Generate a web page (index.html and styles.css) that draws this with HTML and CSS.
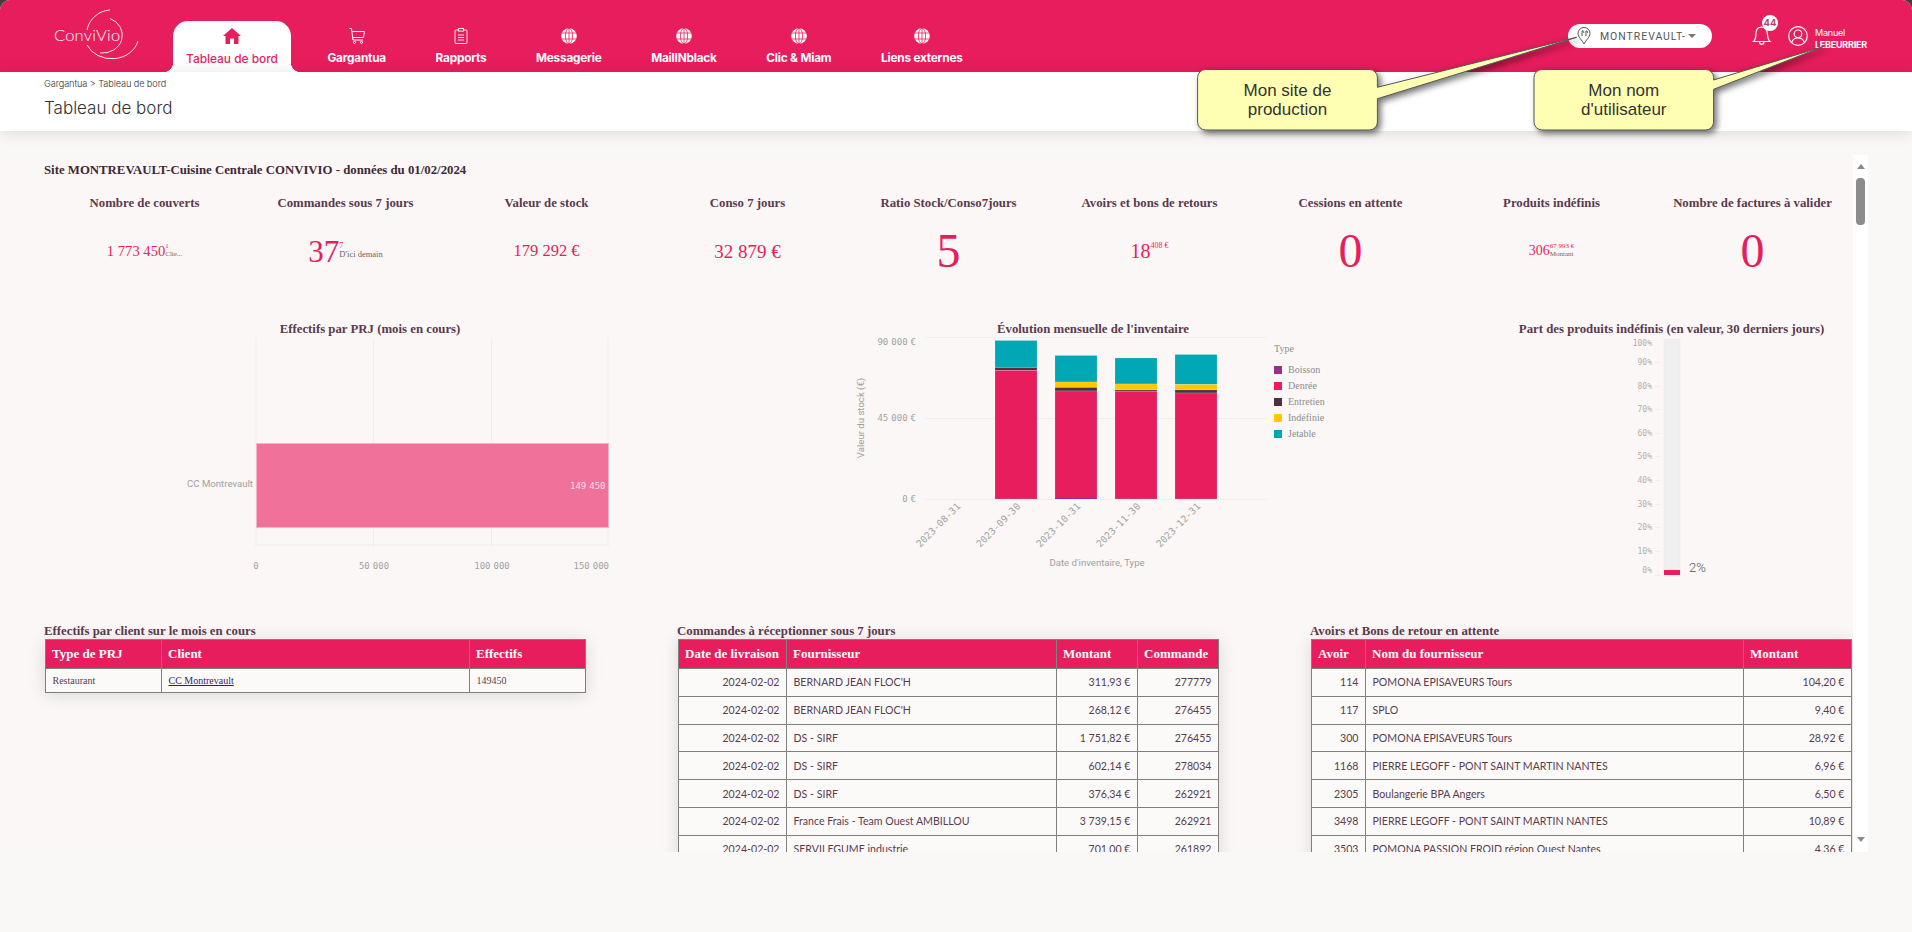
FILE: index.html
```html
<!DOCTYPE html>
<html lang="fr">
<head>
<meta charset="utf-8">
<title>Tableau de bord</title>
<link rel="stylesheet" href="styles.css">
</head>
<body>
<div class="app">
  <header class="topbar">
    <div class="logo">
      <svg width="173" height="72" viewBox="0 0 173 72">
        <g fill="none" stroke="#fff" stroke-width="0.9">
          <path d="M110 10 A25 25 0 0 0 87 30"/>
          <path d="M110 18.5 A20 18 0 0 1 100 53"/>
          <path d="M138 41 A27 23 0 0 1 87 45"/>
        </g>
        <text class="logo-text" x="54" y="41">ConviVio</text>
      </svg>
    </div>
    <nav class="nav">
      <a class="tab tab-active">
        <svg class="tab-icon" width="18" height="16" viewBox="0 0 18 16"><path fill="#e71d5d" d="M9 0 L18 8 H15.5 V16 H11 V10.5 H7 V16 H2.5 V8 H0 Z"/></svg>
        <span>Tableau de bord</span>
      </a>
      <a class="tab">
        <svg class="tab-icon" width="18" height="16" viewBox="0 0 18 16"><g fill="none" stroke="#fff" stroke-width="1"><path d="M1.5 0.5 H3.5 L5 12 H15"/><path d="M4 3.5 H16.5 L15.5 9.5 H4.8"/><circle cx="6.5" cy="14.3" r="1.1"/><circle cx="13.5" cy="14.3" r="1.1"/></g></svg>
        <span>Gargantua</span>
      </a>
      <a class="tab">
        <svg class="tab-icon" width="18" height="16" viewBox="0 0 18 16"><g fill="none" stroke="#fff" stroke-width="0.9"><rect x="3" y="2" width="12" height="13.5" rx="1"/><rect x="6.5" y="0.5" width="5" height="2.6" fill="#e71d5d"/><path d="M6 7 H12 M6 9.5 H12 M6 12 H12"/></g></svg>
        <span>Rapports</span>
      </a>
      <a class="tab">
        <svg class="tab-icon" width="18" height="16" viewBox="0 0 18 16"><use href="#globe"/></svg>
        <span>Messagerie</span>
      </a>
      <a class="tab">
        <svg class="tab-icon" width="18" height="16" viewBox="0 0 18 16"><use href="#globe"/></svg>
        <span>MailINblack</span>
      </a>
      <a class="tab">
        <svg class="tab-icon" width="18" height="16" viewBox="0 0 18 16"><use href="#globe"/></svg>
        <span>Clic &amp; Miam</span>
      </a>
      <a class="tab">
        <svg class="tab-icon" width="18" height="16" viewBox="0 0 18 16"><use href="#globe"/></svg>
        <span>Liens externes</span>
      </a>
    </nav>
    <div class="tools">
      <div class="site-pill">
        <svg width="14" height="18" viewBox="0 0 14 18"><g fill="none" stroke="#555" stroke-width="1"><path d="M7 17 C5 13 1 10 1 6.5 A6 6 0 0 1 13 6.5 C13 10 9 13 7 17 Z"/><path d="M5 4 V9 M9 4 V9 M5 4 A1 1 0 0 1 6.4 6 M9 4 A1 1 0 0 1 10 6"/></g></svg>
        <span class="site-name">MONTREVAULT-</span>
        <span class="caret"></span>
      </div>
      <div class="bell">
        <svg width="20" height="20" viewBox="0 0 20 20"><g fill="none" stroke="#fff" stroke-width="1.2"><path d="M1.5 15.5 C4 13.5 3.8 10 4 7 C4.3 3.5 6.5 1.2 9.5 1.2 C12.5 1.2 15 3.5 15.3 7 C15.6 10 15.6 13.5 18 15.5 Z"/><path d="M7.5 16 A2.2 2.2 0 0 0 12 16"/></g></svg>
        <span class="badge">44</span>
      </div>
      <svg class="user-icon" width="20" height="20" viewBox="0 0 20 20"><g fill="none" stroke="#fff" stroke-width="1.2"><circle cx="10" cy="10" r="9.3"/><circle cx="10" cy="7.8" r="3.8"/><path d="M3.8 16.5 C4.5 13.5 6.5 12 10 12 C13.5 12 15.5 13.5 16.2 16.5"/></g></svg>
      <div class="user-name">
        <div>Manuel</div>
        <div class="user-last">LEBEURRIER</div>
      </div>
    </div>
  </header>

  <section class="subhead">
    <div class="crumbs">Gargantua &gt; Tableau de bord</div>
    <h1 class="page-title">Tableau de bord</h1>
  </section>

  <main class="main">
    <div class="scroll">
      <h2 class="site-title">Site MONTREVAULT-Cuisine Centrale CONVIVIO - données du 01/02/2024</h2>

      <div class="kpis">
        <div class="kpi"><h3>Nombre de couverts</h3><div class="kpi-value"><span class="v-s15">1 773 450</span><span class="aside"><span class="sup">1</span><span class="cap">Clie...</span></span></div></div>
        <div class="kpi"><h3>Commandes sous 7 jours</h3><div class="kpi-value"><span class="v-s32">37</span><span class="aside aside-lg"><span class="sup">7</span><span class="cap">D'ici demain</span></span></div></div>
        <div class="kpi"><h3>Valeur de stock</h3><div class="kpi-value"><span class="v-s16">179 292 €</span></div></div>
        <div class="kpi"><h3>Conso 7 jours</h3><div class="kpi-value"><span class="v-s19">32 879 €</span></div></div>
        <div class="kpi"><h3>Ratio Stock/Conso7jours</h3><div class="kpi-value"><span class="v-s48">5</span></div></div>
        <div class="kpi"><h3>Avoirs et bons de retours</h3><div class="kpi-value"><span class="v-s20">18</span><span class="aside aside-top"><span class="sup">408 €</span></span></div></div>
        <div class="kpi"><h3>Cessions en attente</h3><div class="kpi-value"><span class="v-s48">0</span></div></div>
        <div class="kpi"><h3>Produits indéfinis</h3><div class="kpi-value"><span class="v-s14">306</span><span class="aside"><span class="sup">67 993 €</span><span class="cap">Montant</span></span></div></div>
        <div class="kpi"><h3>Nombre de factures à valider</h3><div class="kpi-value"><span class="v-s48">0</span></div></div>
      </div>

      <div class="charts">
        <figure class="chart chart-a">
          <figcaption>Effectifs par PRJ (mois en cours)</figcaption>
          <svg width="652" height="286" viewBox="44 337 652 286">
            <g class="grid">
              <path d="M256 338 V547 M373.5 338 V547 M491.5 338 V547 M608 338 V547 M256 545 H608"/>
            </g>
            <rect x="256.5" y="443.5" width="352" height="84" fill="#f0729b" stroke="#f6b3c9"/>
            <text class="label" x="253" y="487" text-anchor="end">CC Montrevault</text>
            <text class="tick val" x="605.5" y="489" text-anchor="end">149 450</text>
            <text class="tick" x="256" y="569" text-anchor="middle">0</text>
            <text class="tick" x="374" y="569" text-anchor="middle">50 000</text>
            <text class="tick" x="492" y="569" text-anchor="middle">100 000</text>
            <text class="tick" x="609" y="569" text-anchor="end">150 000</text>
          </svg>
        </figure>

        <figure class="chart chart-b">
          <figcaption>Évolution mensuelle de l'inventaire</figcaption>
          <svg width="794" height="286" viewBox="696 337 794 286">
            <g class="grid">
              <path d="M925 337.5 H1267 M925 418.5 H1267 M925 499.5 H1267"/>
            </g>
            <g class="stack">
              <rect x="995" y="340.5" width="42" height="27" fill="#00a8b5"/>
              <rect x="995" y="367.5" width="42" height="3" fill="#4e3041"/>
              <rect x="995" y="370.5" width="42" height="128.5" fill="#e71d5d"/>
              <rect x="1055" y="355.5" width="42" height="26.5" fill="#00a8b5"/>
              <rect x="1055" y="382" width="42" height="5.5" fill="#ffc800"/>
              <rect x="1055" y="387.5" width="42" height="3.5" fill="#4e3041"/>
              <rect x="1055" y="391" width="42" height="108" fill="#e71d5d"/>
              <rect x="1115" y="358" width="42" height="26" fill="#00a8b5"/>
              <rect x="1115" y="384" width="42" height="6" fill="#ffc800"/>
              <rect x="1115" y="390" width="42" height="1.2" fill="#4e3041"/>
              <rect x="1115" y="391.2" width="42" height="107.8" fill="#e71d5d"/>
              <rect x="1175" y="354.5" width="42" height="30" fill="#00a8b5"/>
              <rect x="1175" y="384.5" width="42" height="5.5" fill="#ffc800"/>
              <rect x="1175" y="390" width="42" height="3" fill="#4e3041"/>
              <rect x="1175" y="393" width="42" height="106" fill="#e71d5d"/>
            </g>
            <rect x="1055" y="498" width="42" height="1" fill="#9a2f8e"/>
            <text class="tick" x="916" y="345" text-anchor="end">90 000 €</text>
            <text class="tick" x="916" y="421" text-anchor="end">45 000 €</text>
            <text class="tick" x="916" y="502" text-anchor="end">0 €</text>
            <text class="label" transform="translate(864 418) rotate(-90)" text-anchor="middle">Valeur du stock (€)</text>
            <text class="tick date" transform="translate(961 507) rotate(-45)" text-anchor="end">2023-08-31</text>
            <text class="tick date" transform="translate(1021 507) rotate(-45)" text-anchor="end">2023-09-30</text>
            <text class="tick date" transform="translate(1081 507) rotate(-45)" text-anchor="end">2023-10-31</text>
            <text class="tick date" transform="translate(1141 507) rotate(-45)" text-anchor="end">2023-11-30</text>
            <text class="tick date" transform="translate(1201 507) rotate(-45)" text-anchor="end">2023-12-31</text>
            <text class="label" x="1097" y="566" text-anchor="middle">Date d'inventaire, Type</text>
            <text class="legend" x="1274" y="352">Type</text>
            <rect x="1274" y="366" width="8" height="8" fill="#9a2f8e"/>
            <text class="legend" x="1288" y="373">Boisson</text>
            <rect x="1274" y="382" width="8" height="8" fill="#e71d5d"/>
            <text class="legend" x="1288" y="389">Denrée</text>
            <rect x="1274" y="398" width="8" height="8" fill="#4e3041"/>
            <text class="legend" x="1288" y="405">Entretien</text>
            <rect x="1274" y="414" width="8" height="8" fill="#ffc800"/>
            <text class="legend" x="1288" y="421">Indéfinie</text>
            <rect x="1274" y="430" width="8" height="8" fill="#00a8b5"/>
            <text class="legend" x="1288" y="437">Jetable</text>
          </svg>
        </figure>

        <figure class="chart chart-c">
          <figcaption>Part des produits indéfinis (en valeur, 30 derniers jours)</figcaption>
          <svg width="363" height="286" viewBox="1490 337 363 286">
            <rect x="1664" y="339" width="16" height="236" fill="#efefef" stroke="#e9e7e7" stroke-width="0.5"/>
            <rect x="1664" y="570" width="16" height="5" fill="#e71d5d"/>
            <g class="grid">
              <path d="M1655 362.5 H1661 M1655 386.5 H1661 M1655 409.5 H1661 M1655 433.5 H1661 M1655 456.5 H1661 M1655 480.5 H1661 M1655 504.5 H1661 M1655 527.5 H1661 M1655 551.5 H1661 M1655 575.5 H1661"/>
            </g>
            <g class="tick-s" text-anchor="end">
              <text x="1652" y="346">100%</text>
              <text x="1652" y="364.5">90%</text>
              <text x="1652" y="388.5">80%</text>
              <text x="1652" y="411.7">70%</text>
              <text x="1652" y="435.7">60%</text>
              <text x="1652" y="459">50%</text>
              <text x="1652" y="483">40%</text>
              <text x="1652" y="507">30%</text>
              <text x="1652" y="530">20%</text>
              <text x="1652" y="554">10%</text>
              <text x="1652" y="572.5">0%</text>
            </g>
            <text class="pct" x="1689" y="572">2%</text>
          </svg>
        </figure>
      </div>

      <div class="tables">
        <section class="tbl-block">
          <h3 class="tbl-title">Effectifs par client sur le mois en cours</h3>
          <table class="tbl tbl-small">
            <colgroup><col class="c116"><col class="c308"><col></colgroup>
            <thead><tr><th>Type de PRJ</th><th>Client</th><th>Effectifs</th></tr></thead>
            <tbody><tr><td>Restaurant</td><td><a class="link">CC Montrevault</a></td><td>149450</td></tr></tbody>
          </table>
        </section>

        <section class="tbl-block">
          <h3 class="tbl-title">Commandes à réceptionner sous 7 jours</h3>
          <table class="tbl">
            <colgroup><col class="c108"><col class="c270"><col class="c81"><col></colgroup>
            <thead><tr><th>Date de livraison</th><th>Fournisseur</th><th>Montant</th><th>Commande</th></tr></thead>
            <tbody>
              <tr><td class="r">2024-02-02</td><td>BERNARD JEAN FLOC'H</td><td class="r">311,93 €</td><td class="r">277779</td></tr>
              <tr><td class="r">2024-02-02</td><td>BERNARD JEAN FLOC'H</td><td class="r">268,12 €</td><td class="r">276455</td></tr>
              <tr><td class="r">2024-02-02</td><td>DS - SIRF</td><td class="r">1 751,82 €</td><td class="r">276455</td></tr>
              <tr><td class="r">2024-02-02</td><td>DS - SIRF</td><td class="r">602,14 €</td><td class="r">278034</td></tr>
              <tr><td class="r">2024-02-02</td><td>DS - SIRF</td><td class="r">376,34 €</td><td class="r">262921</td></tr>
              <tr><td class="r">2024-02-02</td><td>France Frais - Team Ouest AMBILLOU</td><td class="r">3 739,15 €</td><td class="r">262921</td></tr>
              <tr><td class="r">2024-02-02</td><td>SERVILEGUME industrie</td><td class="r">701,00 €</td><td class="r">261892</td></tr>
            </tbody>
          </table>
        </section>

        <section class="tbl-block">
          <h3 class="tbl-title">Avoirs et Bons de retour en attente</h3>
          <table class="tbl">
            <colgroup><col class="c54"><col class="c378"><col></colgroup>
            <thead><tr><th>Avoir</th><th>Nom du fournisseur</th><th>Montant</th></tr></thead>
            <tbody>
              <tr><td class="r">114</td><td>POMONA EPISAVEURS Tours</td><td class="r">104,20 €</td></tr>
              <tr><td class="r">117</td><td>SPLO</td><td class="r">9,40 €</td></tr>
              <tr><td class="r">300</td><td>POMONA EPISAVEURS Tours</td><td class="r">28,92 €</td></tr>
              <tr><td class="r">1168</td><td>PIERRE LEGOFF - PONT SAINT MARTIN NANTES</td><td class="r">6,96 €</td></tr>
              <tr><td class="r">2305</td><td>Boulangerie BPA Angers</td><td class="r">6,50 €</td></tr>
              <tr><td class="r">3498</td><td>PIERRE LEGOFF - PONT SAINT MARTIN NANTES</td><td class="r">10,89 €</td></tr>
              <tr><td class="r">3503</td><td>POMONA PASSION FROID région Ouest Nantes</td><td class="r">4,36 €</td></tr>
            </tbody>
          </table>
        </section>
      </div>
    </div>
    <div class="scrollbar">
      <span class="arrow-up"></span>
      <span class="thumb"></span>
      <span class="arrow-down"></span>
    </div>
  </main>

  <svg class="callouts" width="1912" height="140" viewBox="0 0 1912 140">
    <defs>
      <symbol id="globe" viewBox="0 0 18 16">
        <circle cx="9" cy="8" r="7.8" fill="#fff"/>
        <g fill="none" stroke="#e71d5d" stroke-width="0.8">
          <ellipse cx="9" cy="8" rx="3.6" ry="7.8"/>
          <path d="M9 0 V16 M1.6 5 H16.4 M1.6 11 H16.4"/>
        </g>
      </symbol>
    </defs>
    <g class="bubble">
      <path d="M1205.6 69.5 H1369.4 A8 8 0 0 1 1377.4 77.5 V87.3 L1576.6 37.3 L1377.4 98.7 V122 A8 8 0 0 1 1369.4 130 H1205.6 A8 8 0 0 1 1197.6 122 V77.5 A8 8 0 0 1 1205.6 69.5 Z"/>
      <path d="M1542 69.5 H1705.6 A8 8 0 0 1 1713.6 77.5 V80 L1823 46.7 L1713.6 89.3 V122 A8 8 0 0 1 1705.6 130 H1542 A8 8 0 0 1 1534 122 V77.5 A8 8 0 0 1 1542 69.5 Z"/>
    </g>
    <g class="bubble-text" text-anchor="middle">
      <text x="1287.5" y="96">Mon site de</text>
      <text x="1287.5" y="115">production</text>
      <text x="1623.8" y="96">Mon nom</text>
      <text x="1623.8" y="115">d'utilisateur</text>
    </g>
  </svg>
</div>
</body>
</html>
```
FILE: styles.css
```css
* { box-sizing: border-box; }
html, body { margin: 0; padding: 0; height: 100%; background: #3f3f3f; }
body { overflow: hidden; font-family: "Liberation Serif", serif; }

.app {
  position: relative;
  width: 1912px;
  height: 932px;
  display: flex;
  flex-direction: column;
  background: #faf8f7;
  border-radius: 10px 10px 0 0;
  overflow: hidden;
}

/* Top bar */
.topbar {
  height: 72px;
  flex: none;
  display: flex;
  background: #e71d5d;
  color: #fff;
  font-family: Inter, "Liberation Sans", sans-serif;
}
.logo { width: 173px; flex: none; }
.logo-text { font-family: Lato, sans-serif; font-weight: 300; font-size: 16.5px; fill: #fff; letter-spacing: 0.2px; }
.nav { display: flex; gap: 23.5px; align-items: flex-end; }
.tab {
  position: relative;
  height: 51px;
  padding: 7px 13px 0;
  display: flex;
  flex-direction: column;
  align-items: center;
  font-size: 11.8px;
  font-weight: 700;
  letter-spacing: -0.2px;
  color: #fff;
  white-space: nowrap;
}
.tab-icon { display: block; margin-bottom: 7px; }
.tab-active {
  background: #fff;
  color: #e71d5d;
  font-size: 11.9px;
  font-weight: 500;
  letter-spacing: 0;
  border-radius: 15px 15px 0 0;
}
.tab-active::before,
.tab-active::after {
  content: "";
  position: absolute;
  bottom: 0;
  width: 10px;
  height: 10px;
}
.tab-active::before { left: -10px; background: radial-gradient(circle at 0 0, #e71d5d 10px, #fff 10.5px); }
.tab-active::after { right: -10px; background: radial-gradient(circle at 100% 0, #e71d5d 10px, #fff 10.5px); }

.tools {
  margin-left: auto;
  padding-right: 44px;
  display: flex;
  align-items: center;
}
.site-pill {
  width: 144px;
  height: 24px;
  background: #fff;
  border-radius: 12px;
  display: flex;
  align-items: center;
  padding-left: 9px;
  margin-right: 40px;
}
.site-name {
  margin-left: 9px;
  font-family: Roboto, sans-serif;
  font-size: 10.5px;
  letter-spacing: 0.95px;
  color: #555;
}
.caret {
  margin-left: 2px;
  border-left: 4px solid transparent;
  border-right: 4px solid transparent;
  border-top: 4px solid #777;
}
.bell { position: relative; width: 20px; height: 20px; margin-right: 16px; }
.bell svg { display: block; }
.badge {
  position: absolute;
  left: 2px;
  top: -11px;
  width: 16px;
  height: 16px;
  border-radius: 50%;
  background: #fff;
  color: #b0476d;
  font-size: 9.5px;
  font-weight: 700;
  line-height: 16px;
  text-align: center;
  transform: translateX(8px);
}
.user-icon { margin-right: 7px; flex: none; }
.user-name { width: 53px; margin-top: 6px; font-size: 9px; line-height: 12px; letter-spacing: -0.2px; white-space: nowrap; }
.user-last { font-weight: 700; letter-spacing: -0.25px; }

/* Subheader */
.subhead {
  position: relative;
  height: 59px;
  flex: none;
  background: #fff;
  padding: 5px 0 0 44px;
  box-shadow: 0 2px 14px rgba(60, 30, 30, 0.14);
  font-family: Inter, "Liberation Sans", sans-serif;
}
.crumbs { font-size: 9.2px; line-height: 13px; font-weight: 300; letter-spacing: -0.1px; color: #333; }
.page-title { margin: 8px 0 0; font-size: 17px; line-height: 20px; font-weight: 300; color: #333; }

/* Main */
.main { flex: none; height: 721px; padding-top: 24px; display: flex; align-items: flex-start; }
.scroll {
  width: 1853px;
  height: 697px;
  overflow: hidden;
  padding: 7px 0 0 44px;
  background: #fbf7f6;
}
.site-title { margin: 0; font-size: 12.8px; line-height: 16px; font-weight: 700; color: #3e2a36; }

.scrollbar {
  width: 15px;
  height: 697px;
  background: #fff;
  display: flex;
  flex-direction: column;
  align-items: center;
  padding: 9px 0 10px;
}
.arrow-up { border-left: 4px solid transparent; border-right: 4px solid transparent; border-bottom: 5px solid #8a8a8a; }
.arrow-down { margin-top: auto; border-left: 4px solid transparent; border-right: 4px solid transparent; border-top: 5px solid #8a8a8a; }
.thumb { width: 9px; height: 47px; margin-top: 9px; background: #8c8c8c; border-radius: 4px; }

/* KPIs */
.kpis { display: grid; grid-template-columns: repeat(9, 201px); margin-top: 17px; }
.kpi { text-align: center; color: #e71d5d; }
.kpi h3 { margin: 0; font-size: 12.8px; line-height: 16px; font-weight: 700; color: #5a3a4e; white-space: nowrap; }
.kpi-value { height: 52px; margin-top: 14px; display: flex; justify-content: center; align-items: center; line-height: 1; white-space: nowrap; }
.v-s14 { font-size: 14px; }
.v-s15 { font-size: 14.6px; }
.v-s16 { font-size: 16.5px; }
.v-s19 { font-size: 19px; }
.v-s20 { font-size: 20px; }
.v-s32 { font-size: 31px; }
.v-s48 { font-size: 48px; }
.aside { display: flex; flex-direction: column; align-items: flex-start; font-size: 7px; line-height: 8px; padding-bottom: 3px; }
.aside-lg { font-size: 8.5px; line-height: 9px; }
.aside-top { padding-bottom: 10px; font-size: 8px; }
.sup { color: #e71d5d; }
.cap { color: #666; }

/* Charts */
.charts { display: flex; height: 302px; margin-top: 44px; }
.chart { margin: 0; flex: none; }
.chart-a { width: 652px; }
.chart-b { width: 794px; }
.chart-c { width: 363px; }
.chart figcaption {
  height: 16px;
  font-size: 12.8px;
  line-height: 16px;
  font-weight: 700;
  color: #5a3a4e;
  text-align: center;
  white-space: nowrap;
}
.chart svg { display: block; }
.grid path { fill: none; stroke: #f0eded; stroke-width: 1; }
.stack rect { stroke: #fff; stroke-opacity: 0.28; stroke-width: 0.6; }
.tick { font-family: "DejaVu Sans Mono", monospace; font-size: 9px; word-spacing: -2.4px; fill: #a3a3a3; }
.tick.val { fill: #fbdfe8; }
.tick.date { font-size: 9.6px; }
.tick-s { font-family: "DejaVu Sans Mono", monospace; font-size: 8px; fill: #b0b0b0; }
.label { font-family: Roboto, sans-serif; font-size: 9.6px; fill: #a0a0a0; }
.legend { font-family: "Liberation Serif", serif; font-size: 10px; fill: #8d8d8d; }
.pct { font-family: Roboto, sans-serif; font-weight: 300; font-size: 13px; fill: #555; }

/* Tables */
.tables { display: grid; grid-template-columns: repeat(3, 541px); column-gap: 92px; padding-left: 1px; }
.tbl-title { margin: 0 0 0 -1px; font-size: 12.8px; line-height: 16px; font-weight: 700; color: #5a3a4e; white-space: nowrap; }
.tbl {
  width: 541px;
  table-layout: fixed;
  border-collapse: collapse;
  border: 1px solid #808080;
  background: #fbfaf9;
  box-shadow: 0 2px 16px rgba(0, 0, 0, 0.13);
  font-family: Lato, sans-serif;
  font-size: 10.6px;
  color: #5a3a4e;
}
.tbl th {
  height: 29px;
  padding: 0 6px;
  background: #e71d5d;
  color: #fff;
  border: 1px solid #808080;
  font-family: "Liberation Serif", serif;
  font-size: 13px;
  font-weight: 700;
  text-align: left;
  white-space: nowrap;
}
.tbl td {
  height: 27.8px;
  padding: 0 6.5px;
  border: 1px solid #808080;
  white-space: nowrap;
}
.tbl .r { text-align: right; }
.tbl-small { font-family: "Liberation Serif", serif; font-size: 10px; }
.tbl-small td { height: 24px; }
.link { color: #3a1a6e; text-decoration: underline; }
.c54 { width: 54px; }
.c81 { width: 81px; }
.c108 { width: 108px; }
.c116 { width: 116px; }
.c270 { width: 270px; }
.c308 { width: 308px; }
.c378 { width: 378px; }

/* Callouts */
.callouts { position: absolute; left: 0; top: 0; pointer-events: none; }
.bubble path {
  fill: #ffffb3;
  stroke: #555;
  stroke-width: 1;
  filter: drop-shadow(3px 3px 3px rgba(0, 0, 0, 0.55));
}
.bubble-text text { font-family: "Liberation Sans", sans-serif; font-size: 17px; fill: #333; }
```
